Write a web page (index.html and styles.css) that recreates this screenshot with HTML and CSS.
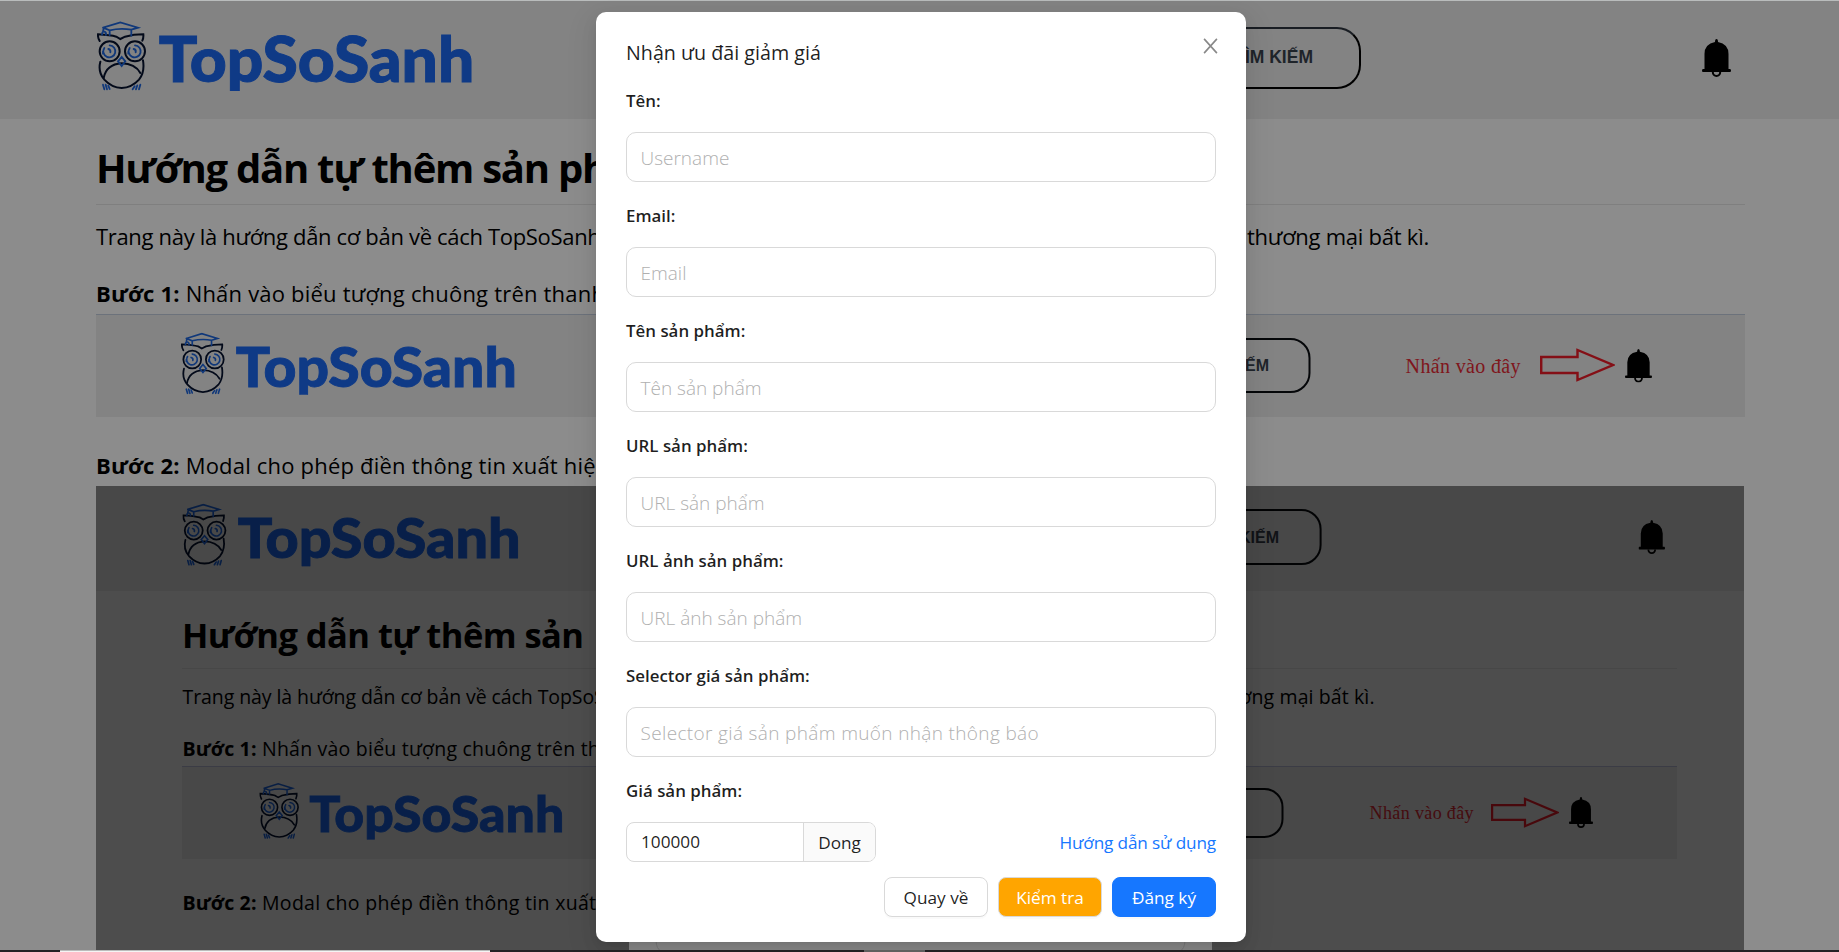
FILE: index.html
```html
<!DOCTYPE html>
<html lang="vi">
<head>
<meta charset="utf-8">
<title>TopSoSanh</title>
<link rel="stylesheet" href="styles.css">
</head>
<body>
<svg class="defs" aria-hidden="true">
  <symbol id="logo" viewBox="50 62 1126 210" preserveAspectRatio="none">
    <g fill="none" stroke="#071330" stroke-width="6" stroke-linecap="round">
      <path d="M58 122 Q52 112 53 102 Q90 104 108 109 L120 116 L134 109 Q160 102 189 102 Q190 112 186 121"/>
      <circle cx="88" cy="153" r="30"/><circle cx="164" cy="153" r="30"/>
      <path d="M60 184 Q52 215 72 238 Q94 262 124 263 Q154 262 176 238 Q194 215 188 180"/>
      <path d="M70 233 Q78 192 124 189 Q164 190 180 218"/>
    </g>
    <g fill="none" stroke="#1e66de" stroke-width="5.5" stroke-linecap="round">
      <path d="M68 82 L120 66 L173 82 L153 88 M68 82 L88 90 Q120 82 153 88 V106 M88 90 V104 M70 84 L68 93 M65 103 Q65 93 72 94 Q78 95 77 104"/>
      <path d="M72 143 A18 18 0 1 0 88 135 M84 146 Q92 148 90 156 M68 153 V160"/>
      <path d="M148 143 A18 18 0 1 0 164 135 M160 146 Q168 148 166 156 M144 153 V160"/>
      <path d="M124 170 L113 183 L124 197 L135 183 Z M68 253 L72 267 M76 253 L80 267 M84 256 L88 266 M180 253 L176 267 M171 255 L167 267 M163 258 L157 267"/>
    </g>
    <text class="logo-text" y="246" textLength="947" lengthAdjust="spacingAndGlyphs" x="235">TopSoSanh</text>
  </symbol>
  <symbol id="bell" viewBox="0 0 29 38" preserveAspectRatio="none">
    <path d="M13 3 Q13 0 14.5 0 Q16 0 16 3 Q26.5 5 26.5 15 V30 H28 Q29 30 29 31.500 Q29 33 28 33 H1 Q0 33 0 31.500 Q0 30 1 30 H2.500 V15 Q2.500 5 13 3 Z"/>
    <path d="M10.800 33 A3.700 4 0 0 0 18.200 33" fill="none" stroke="#000" stroke-width="2"/>
  </symbol>
  <symbol id="arrow" viewBox="0 0 74 34" preserveAspectRatio="none">
    <path d="M1.200 9 H37 V2 L72 17 L37 32 V25 H1.200 Z" fill="none" stroke="#f01c28" stroke-width="2.400"/>
  </symbol>
</svg>

<div class="page">
  <header class="header">
    <svg class="header-logo"><use href="#logo"/></svg>
    <div class="search">TÌM KIẾM</div>
    <svg class="header-bell"><use href="#bell"/></svg>
  </header>
  <main class="guide">
    <h1 class="guide-title">Hướng dẫn tự thêm sản phẩm</h1>
    <p class="intro"><span class="intro-start">Trang này là hướng dẫn cơ bản về cách TopSoSanh</span><span class="intro-end">thương mại bất kì.</span></p>
    <p class="step step-one"><b>Bước 1:</b> <span>Nhấn vào biểu tượng chuông trên thanh</span></p>
    <svg class="shot-bar" viewBox="96 314 1649 103">
      <rect x="96" y="314" width="1649" height="103" fill="#eee"/>
      <rect x="96" y="314" width="1649" height="1" fill="#c5d0e0"/>
      <use href="#logo" x="181" y="332.500" width="334" height="62.300"/>
      <rect class="pill" x="1000" y="339" width="309.500" height="53" rx="19"/>
      <text class="pill-text" x="1269" y="371" font-size="16">TÌM KIẾM</text>
      <text class="note" x="1405.600" y="372.700" font-size="20" textLength="115">Nhấn vào đây</text>
      <use href="#arrow" x="1540" y="348" width="75" height="34"/>
      <use href="#bell" x="1625" y="349" width="27" height="33.500"/>
    </svg>
    <p class="step step-two"><b>Bước 2:</b> <span>Modal cho phép điền thông tin xuất hiện</span></p>
    <svg class="shot-page" viewBox="96 486 1649 464">
      <rect x="96" y="486" width="1648" height="464" fill="#fff"/>
      <rect x="96" y="486" width="1648" height="105" fill="#eee"/>
      <use href="#logo" x="182.400" y="503.400" width="336.500" height="62.800"/>
      <rect class="pill" x="1000" y="510" width="320.600" height="54" rx="19"/>
      <text class="pill-text" x="1279" y="543" font-size="16">TÌM KIẾM</text>
      <use href="#bell" x="1638.500" y="520" width="26.500" height="34"/>
      <text class="shot-title" x="182" y="648" textLength="402">Hướng dẫn tự thêm sản</text>
      <rect x="182" y="668" width="1495" height="1" fill="#ececec"/>
      <text class="shot-text" x="182.500" y="704" textLength="433">Trang này là hướng dẫn cơ bản về cách TopSoSa</text>
      <text class="shot-text" x="1374.500" y="704" text-anchor="end" textLength="148">ương mại bất kì.</text>
      <text class="shot-text bold" x="182.500" y="755.500" textLength="74">Bước 1:</text>
      <text class="shot-text" x="262" y="755.500" textLength="361">Nhấn vào biểu tượng chuông trên than</text>
      <rect x="182" y="766" width="1495" height="93" fill="#eee"/>
      <rect x="182" y="766" width="1495" height="1" fill="#c5c8e8"/>
      <use href="#logo" x="259.300" y="782.800" width="303.400" height="56.600"/>
      <rect class="pill" x="1000" y="789" width="282.500" height="48" rx="18"/>
      <text class="note" x="1369.600" y="819" font-size="18" textLength="104">Nhấn vào đây</text>
      <use href="#arrow" x="1491" y="797" width="68" height="31"/>
      <use href="#bell" x="1569" y="797" width="24" height="31"/>
      <text class="shot-text bold" x="182.500" y="910" textLength="74">Bước 2:</text>
      <text class="shot-text" x="262" y="910" textLength="334">Modal cho phép điền thông tin xuất</text>
      <rect x="96" y="486" width="1648" height="464" fill="#000" opacity=".45"/>
      <rect x="629" y="900" width="583" height="50" fill="#f8f8f8"/>
      <path d="M656 940 Q656 949 662 952 M1185 940 Q1185 949 1179 952" fill="none" stroke="#d9d9d9"/>
    </svg>
  </main>
</div>
<div class="mask"></div>
<div class="taskbar"><i class="tb-light"></i><i class="tb-grey"></i></div>

<section class="modal">
  <div class="modal-head"><h2 class="modal-title">Nhận ưu đãi giảm giá</h2>
    <svg class="close" viewBox="0 0 14 15"><path d="M1 .8 L13 14.200 M13 .8 L1 14.200"/></svg></div>
  <div class="field"><label>Tên:</label><div class="input">Username</div></div>
  <div class="field"><label>Email:</label><div class="input">Email</div></div>
  <div class="field"><label>Tên sản phẩm:</label><div class="input">Tên sản phẩm</div></div>
  <div class="field"><label>URL sản phẩm:</label><div class="input">URL sản phẩm</div></div>
  <div class="field"><label>URL ảnh sản phẩm:</label><div class="input">URL ảnh sản phẩm</div></div>
  <div class="field"><label>Selector giá sản phẩm:</label><div class="input input-long">Selector giá sản phẩm muốn nhận thông báo</div></div>
  <label>Giá sản phẩm:</label>
  <div class="price-row">
    <div class="price"><span class="amount">100000</span><span class="unit">Dong</span></div>
    <a class="help">Hướng dẫn sử dụng</a>
  </div>
  <div class="actions">
    <button class="btn">Quay về</button>
    <button class="btn check">Kiểm tra</button>
    <button class="btn primary">Đăng ký</button>
  </div>
</section>
</body>
</html>
```
FILE: styles.css
```css
* { box-sizing: border-box; }
body { margin: 0; width: 1839px; height: 952px; overflow: hidden; background: #fff; font-family: "Open Sans", "Noto Sans", sans-serif; color: #000; }
.defs { position: absolute; width: 0; height: 0; }
.logo-text { font: 900 186px Lato, sans-serif; fill: #1c6af5; stroke: #1c6af5; stroke-width: 3; }
.page { height: 952px; overflow: hidden; }
.header { height: 119px; background: #eee; display: flex; align-items: flex-start; padding-left: 96px; }
.header-logo { width: 375.300px; height: 70px; margin: 20.700px 0 0 .7px; flex: none; }
.search { width: 380px; height: 62px; margin: 27px 0 0 509px; border: 2px solid #000; border-top-color: #2f3640; border-radius: 24px; text-align: right; padding-right: 46px; font: bold 17.500px/57px "Liberation Sans", sans-serif; color: #3a424e; flex: none; }
.header-bell { width: 29px; height: 38px; margin: 39px 0 0 341px; }
.guide { padding: 0 94px 0 96px; }
.guide-title { margin: 0; height: 86px; padding-top: 20px; border-bottom: 1px solid #e8e8e8; font-size: 40px; letter-spacing: -1.250px; line-height: 57px; font-weight: 700; white-space: nowrap; }
.intro { margin: 0; height: 60px; padding-top: 15px; display: flex; font-size: 22px; line-height: 32px; white-space: nowrap; }
.intro-start { width: 1151px; flex: none; letter-spacing: -.320px; }
.intro-end { letter-spacing: -.250px; }
.step { margin: 0; font-size: 22px; line-height: 32px; letter-spacing: .2px; white-space: nowrap; }
.step-one { height: 49px; padding-top: 12px; }
.step-two { height: 69px; padding-top: 32px; }
.shot-bar { display: block; width: 1649px; height: 103px; }
.shot-page { display: block; width: 1649px; height: 464px; }
.pill { fill: none; stroke: #0a0d12; stroke-width: 2; }
.pill-text { font-family: "Liberation Sans", sans-serif; font-weight: bold; text-anchor: end; fill: #3a424e; }
.note { font-family: "Liberation Serif", serif; fill: #e82a35; }
.shot-title { font-weight: 700; font-size: 34.500px; }
.shot-text { font-size: 19.500px; }
.bold { font-weight: 700; }
.mask { position: absolute; inset: 0; background: rgba(0,0,0,.45); border-top: 1px solid #b9bcbc; }
.taskbar { position: absolute; left: 0; top: 950px; width: 1839px; height: 2px; background: #242225; display: flex; }
.tb-light { width: 430px; margin-left: 60px; background: #f4f4f4; border-top: 1px solid #bbb; }
.tb-grey { width: 61px; margin-left: 374px; background: #666; }
.modal { position: absolute; left: 596px; top: 12px; width: 650px; height: 930px; background: #fff; border-radius: 10px; padding: 25px 30px 25px; color: rgba(0,0,0,.88); box-shadow: 0 6px 16px rgba(0,0,0,.08), 0 3px 6px -4px rgba(0,0,0,.12), 0 9px 28px 8px rgba(0,0,0,.05); }
.modal-head { display: flex; justify-content: space-between; height: 50px; }
.modal-title { margin: 0; font-weight: 400; font-size: 19.700px; line-height: 31px; white-space: nowrap; }
.close { width: 15px; height: 16px; margin: 1px -2px 0 0; fill: none; stroke: #888; stroke-width: 1.500; }
.field { height: 115px; }
label { display: block; height: 45px; font-weight: 600; font-size: 16.900px; line-height: 28px; white-space: nowrap; }
.input { height: 50px; border: 1px solid #d9d9d9; border-radius: 10px; padding-left: 13.500px; font-size: 19px; font-weight: 300; line-height: 51px; color: #b0b0b0; white-space: nowrap; }
.input-long { letter-spacing: .350px; }
.price-row { display: flex; justify-content: space-between; height: 55px; }
.price { width: 250px; height: 40px; border: 1px solid #d9d9d9; border-radius: 8px; display: flex; font-size: 17.200px; line-height: 38px; overflow: hidden; }
.amount { width: 177px; padding-left: 14px; border-right: 1px solid #d9d9d9; }
.unit { flex: 1; text-align: center; background: #fafafa; line-height: 40px; }
.help { color: #1677ff; font-size: 17.200px; letter-spacing: -.150px; line-height: 41px; white-space: nowrap; }
.actions { display: flex; justify-content: flex-end; gap: 10px; }
.btn { width: 104px; height: 40px; padding: 0; border: 1px solid #d9d9d9; border-radius: 8px; background: #fff; color: inherit; font: 17.200px/39px "Open Sans", sans-serif; white-space: nowrap; box-shadow: 0 2px 0 rgba(0,0,0,.02); }
.check { background: orange; color: #fff; }
.primary { background: #1677ff; border-color: #1677ff; color: #fff; }
```
